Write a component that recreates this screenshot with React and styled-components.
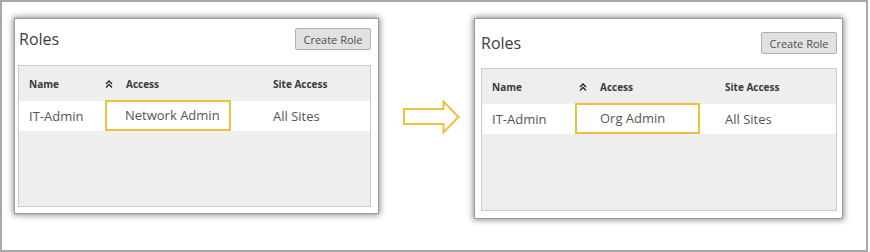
import React from "react";
import styled, { createGlobalStyle } from "styled-components";

const GlobalStyle = createGlobalStyle`
  html, body {
    margin: 0;
    padding: 0;
    background: #ffffff;
    font-family: "Open Sans", "Noto Sans", sans-serif;
  }
`;

const Frame = styled.div`
  width: 868px;
  height: 252px;
  box-sizing: border-box;
  border: 2px solid #a9a9a9;
  background: #ffffff;
  display: flex;
  align-items: flex-start;
  padding: 16px 0 0 12px;
`;

const Panel = styled.div`
  width: ${({ $w }) => $w}px;
  box-sizing: border-box;
  background: #ffffff;
  border: 1px solid #9a9a9a;
  box-shadow: 0 0 6px 1px rgba(0, 0, 0, 0.45);
  padding: ${({ $pad }) => $pad};
  display: flex;
  flex-direction: column;
`;

const PanelHeader = styled.div`
  display: flex;
  align-items: center;
  justify-content: space-between;
  height: 22px;
  margin-bottom: ${({ $gap }) => $gap}px;
`;

const Title = styled.div`
  font-size: ${({ $size }) => $size}px;
  color: #3c3c3c;
  padding-left: ${({ $indent }) => $indent}px;
`;

const Button = styled.button`
  height: 22px;
  width: ${({ $w }) => $w}px;
  box-sizing: border-box;
  background: #e1e1e1;
  border: 1px solid #b0b0b0;
  border-radius: 2px;
  font-family: "Open Sans", "Noto Sans", sans-serif;
  font-size: 11px;
  color: #4f4f4f;
  padding: 0;
`;

const Table = styled.div`
  height: ${({ $h }) => $h}px;
  box-sizing: border-box;
  border: 1px solid #cccccc;
  background: #eeeeee;
`;

const Row = styled.div`
  display: grid;
  grid-template-columns: ${({ $cols }) => $cols};
  align-items: center;
  height: ${({ $h }) => $h}px;
  background: ${({ $bg }) => $bg};
`;

const HeadCell = styled.div`
  display: flex;
  align-items: center;
  gap: 13px;
  font-size: 10px;
  font-weight: 700;
  color: #3a3a3a;
  padding-left: ${({ $pl }) => $pl || 0}px;
`;

const Cell = styled.div`
  font-size: 13px;
  color: #555555;
  padding-left: ${({ $pl }) => $pl || 0}px;
`;

const Highlight = styled.div`
  width: ${({ $w }) => $w}px;
  height: 31px;
  margin-top: -2px;
  box-sizing: border-box;
  border: 2px solid #efbf3f;
  display: flex;
  align-items: center;
  padding-left: ${({ $inset }) => $inset}px;
  font-size: 13px;
  color: #555555;
`;

const ArrowWrap = styled.div`
  margin: 82px 14px 0 24px;
  display: flex;
`;

const SortIcon = () => (
  <svg width="8" height="8" viewBox="0 0 8 8">
    <path d="M1 4 L4 1 L7 4 M1 7.5 L4 4.5 L7 7.5" fill="none" stroke="#222" strokeWidth="1.3" />
  </svg>
);

const Arrow = () => (
  <svg width="57" height="34" viewBox="0 0 57 34">
    <path
      d="M1 9 L40.5 9 L40.5 1.5 L55.5 17 L40.5 32.5 L40.5 24 L1 24 Z"
      fill="#ffffff"
      stroke="#efbf3f"
      strokeWidth="2"
      strokeLinejoin="miter"
    />
  </svg>
);

const RolesPanel = ({ w, pad, gap, tableH, titleSize, titleIndent, cols, iconPad, boxW, inset, access }) => (
  <Panel $w={w} $pad={pad}>
    <PanelHeader $gap={gap}>
      <Title $indent={titleIndent} $size={titleSize}>Roles</Title>
      <Button $w={76}>Create Role</Button>
    </PanelHeader>
    <Table $h={tableH}>
      <Row $cols={cols} $h={35} $bg="#eeeeee">
        <HeadCell $pl={10}>Name</HeadCell>
        <HeadCell $pl={iconPad}>
          <SortIcon />
          Access
        </HeadCell>
        <HeadCell>Site Access</HeadCell>
      </Row>
      <Row $cols={cols} $h={30} $bg="#ffffff">
        <Cell $pl={10}>IT-Admin</Cell>
        <Cell>
          <Highlight $w={boxW} $inset={inset}>
            {access}
          </Highlight>
        </Cell>
        <Cell>All Sites</Cell>
      </Row>
    </Table>
  </Panel>
);

export default function App() {
  return (
    <>
      <GlobalStyle />
      <Frame>
        <RolesPanel
          w={365}
          pad="9px 7px 6px 3px"
          gap={15}
          tableH={142}
          titleSize={16}
          titleIndent={1}
          cols="86px 168px 1fr"
          iconPad={0}
          boxW={126}
          inset={18}
          access="Network Admin"
        />
        <ArrowWrap>
          <Arrow />
        </ArrowWrap>
        <RolesPanel
          w={369}
          pad="13px 5px 7px 6px"
          gap={14}
          tableH={143}
          titleSize={16}
          titleIndent={0}
          cols="93px 150px 1fr"
          iconPad={4}
          boxW={125}
          inset={23}
          access="Org Admin"
        />
      </Frame>
    </>
  );
}
